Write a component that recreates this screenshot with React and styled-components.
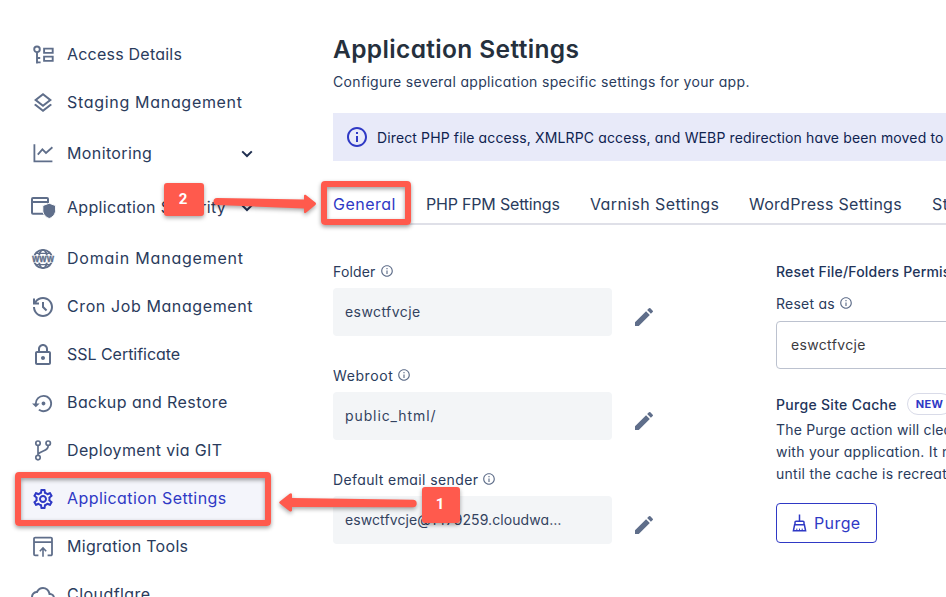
import React from 'react';
import styled, { createGlobalStyle, css } from 'styled-components';
import {
  MdOutlineLayers,
  MdOutlineLock,
  MdSettingsBackupRestore,
  MdOutlineSettings,
  MdOutlineCloud,
  MdInfoOutline,
  MdEdit,
} from 'react-icons/md';
import { RiHistoryLine } from 'react-icons/ri';

const ink = '#2a3b5c';
const slate = '#5f6e8a';
const brand = '#2f39c5';
const coral = '#ff5a4d';

const Global = createGlobalStyle`
  * { box-sizing: border-box; }
  body {
    margin: 0;
    overflow: hidden;
    background: #fff;
    color: ${ink};
    font-family: Inter, "Open Sans", sans-serif;
    font-feature-settings: "cv11", "calt" 0;
    font-size: 14px;
  }
`;

const Page = styled.div`
  position: relative;
  display: grid;
  grid-template-columns: 333px 1fr;
  width: 100%;
  height: 597px;
  overflow: hidden;
`;

/* Single-line label; $track is the letter spacing in pixels. */
const Label = styled.span`
  white-space: nowrap;
  letter-spacing: ${(p) => p.$track || 0}px;
`;

/* Sidebar */
const Sidebar = styled.nav`
  padding: 30px 0 0 20px;
  height: 640px;
`;

const NavItem = styled.a`
  display: flex;
  align-items: center;
  width: 246px;
  height: ${(p) => (p.$tall ? 54 : 48)}px;
  padding: 0 12px 0 11px;
  gap: 12px;
  font-size: 16px;
  color: ${(p) => (p.$active ? brand : ink)};
  background: ${(p) => (p.$active ? '#f4f5fb' : 'transparent')};
  svg {
    flex: none;
    color: ${(p) => (p.$active ? brand : slate)};
    overflow: visible;
  }
`;

const IconSlot = styled.span`
  display: flex;
  align-items: center;
  justify-content: center;
  flex: none;
  width: 24px;
  height: 24px;
  margin-top: ${(p) => p.$drop || 0}px;
`;

const Chevron = styled.svg`
  margin-left: auto;
  margin-right: 1px;
  && { color: #1f2f50; }
`;

/* Main column */
const Main = styled.main`
  min-width: 0;
  padding-top: 32px;
  overflow: hidden;
`;

const Title = styled.h1`
  margin: 0;
  font-size: 24.5px;
  line-height: 34px;
  font-weight: 600;
  color: #25303d;
`;

const Subtitle = styled.p`
  margin: 6px 0 0;
  line-height: 20px;
`;

const Banner = styled.div`
  display: flex;
  align-items: center;
  gap: 8px;
  height: 48px;
  margin-top: 21px;
  padding-left: 12px;
  background: #e8eaf9;
  color: #0f2350;
  svg { flex: none; color: ${brand}; }
`;

const Tabs = styled.div`
  display: flex;
  gap: 30px;
  height: 45px;
  margin-top: 19px;
  border-bottom: 2px solid #dfe0e8;
  font-size: 16px;
`;

const Tab = styled.a`
  flex: none;
  width: ${(p) => p.$w}px;
  line-height: 48px;
  color: ${(p) => (p.$active ? brand : ink)};
`;

const Columns = styled.div`
  display: grid;
  grid-template-columns: 443px 400px;
  padding-top: 36px;
`;

const Field = styled.div`
  height: 104px;
`;

const FieldLabel = styled.div`
  display: flex;
  align-items: center;
  gap: 4px;
  height: 20px;
  svg { color: ${slate}; flex: none; }
`;

const FieldRow = styled.div`
  display: flex;
  align-items: center;
  gap: 20px;
  margin-top: 7px;
  > svg { color: ${slate}; margin-top: 10px; }
`;

const Value = styled.div`
  display: flex;
  align-items: center;
  width: 279px;
  height: 48px;
  padding: 0 12px 1px;
  border-radius: 4px;
  background: #f3f5f7;
  color: #33435f;
`;

const Heading = styled.div`
  display: flex;
  align-items: center;
  gap: 10px;
  height: 22px;
  margin-top: -1px;
  font-weight: 500;
  color: #22345a;
`;

const ResetLabel = styled(FieldLabel)`
  margin-top: 11px;
`;

const Select = styled.div`
  display: flex;
  align-items: center;
  height: 48px;
  margin: 8px 0 25px;
  padding: 0 0 1px 14px;
  border: 1px solid #bcc2cf;
  border-radius: 4px;
  color: #3b3b3f;
`;

const Pill = styled.span`
  height: 22px;
  padding: 0 8px;
  border: 1px solid #d9dbe8;
  border-radius: 11px;
  line-height: 20px;
  font-size: 11px;
  font-weight: 700;
  color: ${brand};
`;

const Paragraph = styled.p`
  display: flex;
  flex-direction: column;
  margin: 4px 0 18px;
  line-height: 22px;
`;

const Button = styled.button`
  display: flex;
  align-items: center;
  gap: 7px;
  width: 101px;
  height: 40px;
  padding: 0 0 0 15px;
  border: 1px solid ${brand};
  border-radius: 4px;
  background: #fff;
  color: ${brand};
  font: inherit;
  font-feature-settings: inherit;
  font-size: 16px;
`;

/* Callouts laid over the page */
const over = css`
  position: absolute;
  left: ${(p) => p.$x}px;
  top: ${(p) => p.$y}px;
  width: ${(p) => p.$w}px;
  height: ${(p) => p.$h}px;
`;

const Ring = styled.div`
  ${over}
  border: 6px solid ${coral};
  border-radius: 4px;
  box-shadow: 0 2px 4px rgba(0, 0, 0, 0.38), inset 0 2px 4px rgba(0, 0, 0, 0.38);
`;

const Step = styled.div`
  ${over}
  display: flex;
  align-items: center;
  justify-content: center;
  padding: 0 2px 2px 0;
  border-radius: 3px;
  background: ${coral};
  box-shadow: 0 2px 4px rgba(0, 0, 0, 0.35);
  color: #fff;
  font-family: Roboto, sans-serif;
  font-size: 15px;
  font-weight: 700;
`;

const Arrow = styled.svg`
  ${over}
  overflow: visible;
  fill: ${coral};
  filter: drop-shadow(0 2px 2px rgba(0, 0, 0, 0.35));
`;

const Line = ({ children, w = 2 }) => (
  <svg width="24" height="24" viewBox="0 0 24 24" fill="none" stroke="currentColor" strokeWidth={w}>
    {children}
  </svg>
);

const AccessIcon = () => (
  <Line w={1.9}>
    <circle cx="6" cy="7.3" r="2.8" />
    <path d="M6 10v11.4M6 16h3.2M6 20.4h3.6" />
    <path d="M13.1 6.6h8.6v4.3h-8.6zM13.1 14.6h8.6v4.3h-8.6z" />
  </Line>
);

const MonitorIcon = () => (
  <Line w={1.8}>
    <path d="M3.4 3.2v17.1H21.4M6.8 13.7l4.6-5.4 3.6 3.6 6.4-5.6" />
  </Line>
);

const SecurityIcon = () => (
  <Line>
    <rect x="1" y="3" width="16" height="15.8" rx="1" />
    <path d="M1 7h16" />
    <path d="M18.2 8.2l6.4 2.4v4.6c0 3.8-2.6 6.9-6.4 8.3-3.8-1.4-6.4-4.5-6.4-8.3v-4.6z" fill="currentColor" stroke="#fff" strokeWidth="1" />
  </Line>
);

const Www = styled.text`
  font: 700 10px "Open Sans", sans-serif;
  fill: currentColor;
  stroke: currentColor;
  stroke-width: 0.3px;
`;

const WebIcon = () => (
  <Line w={1.8}>
    <circle cx="12" cy="12" r="9.2" />
    <ellipse cx="12" cy="12" rx="4.2" ry="9.2" />
    <path d="M5 6.3h14M5 17.7h14" strokeWidth="1.2" />
    <path d="M0 12h24" stroke="#fff" strokeWidth="7.4" />
    <Www x="1" y="14.8" textLength="22" lengthAdjust="spacingAndGlyphs">www</Www>
  </Line>
);

const GitIcon = () => (
  <Line w={1.7}>
    <circle cx="7" cy="5.2" r="2.2" />
    <circle cx="7" cy="19.6" r="2.2" />
    <circle cx="17.2" cy="5.2" r="2.2" />
    <path d="M7 7.4v10M17.2 7.4c0 5.6-5.4 4.6-10.2 8.6" />
  </Line>
);

const MigrationIcon = () => (
  <Line w={1.8}>
    <path d="M7.4 21.4H4.2a1.2 1.2 0 0 1-1.2-1.2V4.8a1.2 1.2 0 0 1 1.2-1.2h15.6a1.2 1.2 0 0 1 1.2 1.2v15.4a1.2 1.2 0 0 1-1.2 1.2h-3.2M3 8.2h18" />
    <path d="M12 22.8v-8.6M8.8 17.2l3.2-3.2 3.2 3.2" strokeWidth="1.6" />
  </Line>
);

const BrushIcon = () => (
  <svg width="15" height="18" viewBox="0 0 15 18" fill="none" stroke="currentColor" strokeWidth="1.5">
    <path d="M7.5 0.4v6.4M3 10.8V8.2a1 1 0 0 1 1-1h7a1 1 0 0 1 1 1v2.6M2.6 10.8h9.8l1.2 6H1.4z" />
    <path d="M4.8 14.6v2M7.5 14.6v2M10.2 14.6v2" strokeWidth="1" />
  </svg>
);

const Down = () => (
  <Chevron width="12" height="12" viewBox="0 0 12 12" fill="none" stroke="currentColor" strokeWidth="2">
    <path d="M1.2 4.4l4.8 4.6L10.8 4.4" />
  </Chevron>
);

const NAV = [
  { text: 'Access Details', track: 0.22, icon: <AccessIcon /> },
  { text: 'Staging Management', track: 0.69, icon: <MdOutlineLayers size={24} />, drop: 2 },
  { text: 'Monitoring', track: 0.38, icon: <MonitorIcon />, menu: true },
  { text: 'Application Security', track: 0.31, icon: <SecurityIcon />, menu: true },
  { text: 'Domain Management', track: 0.79, icon: <WebIcon />, drop: 2 },
  { text: 'Cron Job Management', track: 0.6, icon: <RiHistoryLine size={24} />, drop: 2 },
  { text: 'SSL Certificate', track: -0.03, icon: <MdOutlineLock size={24} />, drop: 2 },
  { text: 'Backup and Restore', track: 0.42, icon: <MdSettingsBackupRestore size={23} />, drop: 2 },
  { text: 'Deployment via GIT', track: 0.35, icon: <GitIcon /> },
  { text: 'Application Settings', track: 0.42, icon: <MdOutlineSettings size={24} />, drop: 2, active: true },
  { text: 'Migration Tools', track: 0.29, icon: <MigrationIcon /> },
  { text: 'Cloudflare', track: 0.45, icon: <MdOutlineCloud size={24} />, drop: 2 },
];

const TABS = [
  { text: 'General', track: 0.5, w: 63, active: true },
  { text: 'PHP FPM Settings', track: -0.19, w: 134 },
  { text: 'Varnish Settings', track: 0.38, w: 129 },
  { text: 'WordPress Settings', track: 0.27, w: 153 },
  { text: 'Staging', track: 0.4, w: 60 },
];

const FIELDS = [
  { label: 'Folder', track: 0.17, value: 'eswctfvcje', valueTrack: 0.42 },
  { label: 'Webroot', track: 0.6, value: 'public_html/', valueTrack: 0.9 },
  { label: 'Default email sender', track: 0.39, value: 'eswctfvcje@1479259.cloudwa…', valueTrack: 0.09 },
];

export default function App() {
  return (
    <Page>
      <Global />
      <Sidebar>
        {NAV.map((n) => (
          <NavItem key={n.text} $tall={n.menu} $active={n.active}>
            <IconSlot $drop={n.drop}>{n.icon}</IconSlot>
            <Label $track={n.track}>{n.text}</Label>
            {n.menu && <Down />}
          </NavItem>
        ))}
      </Sidebar>

      <Main>
        <Title><Label $track={0.36}>Application Settings</Label></Title>
        <Subtitle><Label $track={0.33}>Configure several application specific settings for your app.</Label></Subtitle>
        <Banner>
          <MdInfoOutline size={24} />
          <Label $track={0.13}>Direct PHP file access, XMLRPC access, and WEBP redirection have been moved to</Label>
        </Banner>
        <Tabs>
          {TABS.map((t) => (
            <Tab key={t.text} $w={t.w} $active={t.active}><Label $track={t.track}>{t.text}</Label></Tab>
          ))}
        </Tabs>
        <Columns>
          <div>
            {FIELDS.map((f) => (
              <Field key={f.label}>
                <FieldLabel><Label $track={f.track}>{f.label}</Label><MdInfoOutline size={14} /></FieldLabel>
                <FieldRow>
                  <Value><Label $track={f.valueTrack}>{f.value}</Label></Value>
                  <MdEdit size={24} />
                </FieldRow>
              </Field>
            ))}
          </div>
          <div>
            <Heading><Label $track={0.2}>Reset File/Folders Permissions</Label></Heading>
            <ResetLabel><Label $track={0.25}>Reset as</Label><MdInfoOutline size={14} /></ResetLabel>
            <Select><Label $track={0.34}>eswctfvcje</Label></Select>
            <Heading>
              <Label $track={0.3}>Purge Site Cache</Label>
              <Pill><Label $track={0.3}>NEW</Label></Pill>
            </Heading>
            <Paragraph>
              <Label $track={0.2}>The Purge action will clear</Label>
              <Label $track={0.26}>with your application. It may</Label>
              <Label $track={0.27}>until the cache is recreated.</Label>
            </Paragraph>
            <Button><BrushIcon /><Label $track={0.4}>Purge</Label></Button>
          </div>
        </Columns>
      </Main>

      <Ring $x={15} $y={472} $w={256} $h={54} />
      <Ring $x={321} $y={181} $w={90} $h={44} />
      <Arrow $x={213} $y={194} $w={103} $h={20} viewBox="0 0 103 20">
        <path d="M4 4 L91 5.4 V2 Q91 .2 92.6 .8 L102.4 8.6 Q103.6 9.8 102.4 11 L92.6 19 Q91 19.6 91 18 V14.4 L4 11 A3.5 3.5 0 0 1 4 4Z" />
      </Arrow>
      <Arrow $x={279} $y={493} $w={139} $h={19} viewBox="0 0 139 19">
        <path d="M134 6.8 L13 5 V1.6 Q12.6 -.4 10.6 .8 L.8 8.4 Q-.4 9.4 .8 10.6 L10.6 18.2 Q12.6 19.2 13 17.4 V14 L134 14.2 A3.7 3.7 0 0 0 134 6.8Z" />
      </Arrow>
      <Step $x={164} $y={183} $w={40} $h={33}>2</Step>
      <Step $x={422} $y={487} $w={38} $h={36}>1</Step>
    </Page>
  );
}
